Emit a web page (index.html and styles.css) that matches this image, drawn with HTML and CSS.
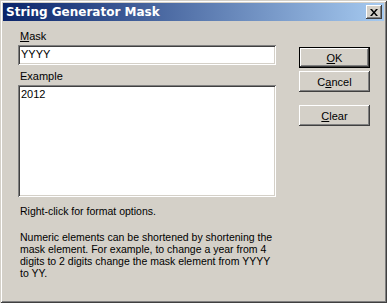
FILE: index.html
```html
<!DOCTYPE html>
<html lang="en">
<head>
    <meta charset="UTF-8">
    <title>String Generator Mask</title>
    <link rel="stylesheet" href="styles.css">
</head>
<body>
    <div class="window">
        <div class="titlebar">
            <span class="title">String Generator Mask</span>
            <button class="close-btn" type="button">
                <svg width="8" height="7" viewBox="0 0 8 7">
                    <path d="M0 0h2l2 2.5L6 0h2L5 3.5 8 7H6L4 4.5 2 7H0l3-3.5z" fill="#000"/>
                </svg>
            </button>
        </div>

        <div class="body">
            <div class="main-row">
                <div class="fields">
                    <label class="field-label"><u>M</u>ask</label>
                    <div class="edit mask-edit">YYYY</div>
                    <label class="field-label">Example</label>
                    <div class="edit example-edit">2012</div>
                </div>
                <div class="buttons">
                    <button class="btn default" type="button"><u>O</u>K</button>
                    <button class="btn" type="button">C<u>a</u>ncel</button>
                    <button class="btn clear" type="button"><u>C</u>lear</button>
                </div>
            </div>

            <p class="hint">Right-click for format options.</p>
            <p class="hint">Numeric elements can be shortened by shortening the mask element. For example, to change a year from 4 digits to 2 digits change the mask element from YYYY to YY.</p>
        </div>
    </div>
</body>
</html>
```
FILE: styles.css
```css
body {
    margin: 0;
    background-color: #d4d0c8;
    font-family: "Liberation Sans", Arial, sans-serif;
    font-size: 11px;
    color: black;
}
.window {
    width: 387px;
    height: 303px;
    box-sizing: border-box;
    padding: 3px;
    background-color: #d4d0c8;
    box-shadow: inset 1px 1px 0 #d4d0c8, inset -1px -1px 0 #404040,
                inset 2px 2px 0 #ffffff, inset -2px -2px 0 #808080;
}
.titlebar {
    height: 18px;
    display: flex;
    align-items: center;
    justify-content: space-between;
    padding: 0 2px 0 3px;
    background: linear-gradient(to right, #0a246a, #a6caf0);
}
.title {
    color: white;
    font-family: "DejaVu Sans", Tahoma, sans-serif;
    font-weight: bold;
    font-size: 12px;
}
.close-btn {
    width: 16px;
    height: 14px;
    padding: 0;
    border: none;
    display: flex;
    align-items: center;
    justify-content: center;
    background-color: #d4d0c8;
    box-shadow: inset -1px -1px 0 #404040, inset 1px 1px 0 #ffffff,
                inset -2px -2px 0 #808080;
}
.body {
    padding: 8px 12px 0 15px;
}
.main-row {
    display: flex;
}
.fields {
    width: 258px;
}
.field-label {
    display: block;
    padding-left: 2px;
    height: 15px;
    line-height: 15px;
    margin-bottom: 1px;
}
.mask-edit + .field-label {
    margin-top: 4px;
}
.edit {
    box-sizing: border-box;
    background-color: white;
    padding: 3px 3px 0 3px;
    line-height: 13px;
    box-shadow: inset 1px 1px 0 #808080, inset -1px -1px 0 #ffffff,
                inset 2px 2px 0 #404040, inset -2px -2px 0 #d4d0c8;
}
.mask-edit {
    height: 20px;
    margin-bottom: 4px;
}
.example-edit {
    height: 112px;
}
.buttons {
    display: flex;
    flex-direction: column;
    margin-left: 23px;
    padding-top: 18px;
}
.btn {
    width: 71px;
    height: 21px;
    padding: 0;
    border: none;
    font-family: "Liberation Sans", Arial, sans-serif;
    font-size: 11px;
    color: black;
    background-color: #d4d0c8;
    margin-bottom: 3px;
    box-shadow: inset -1px -1px 0 #404040, inset 1px 1px 0 #ffffff,
                inset -2px -2px 0 #808080;
}
.btn.default {
    box-shadow: inset 0 0 0 1px #000000, inset -2px -2px 0 #404040,
                inset 2px 2px 0 #ffffff, inset -3px -3px 0 #808080;
}
.btn.clear {
    margin-top: 10px;
}
.hint {
    margin: 0 0 0 2px;
    font-size: 10.5px;
    line-height: 12px;
    width: 257px;
}
.hint:first-of-type {
    margin-top: 8px;
    margin-bottom: 14px;
}
```
